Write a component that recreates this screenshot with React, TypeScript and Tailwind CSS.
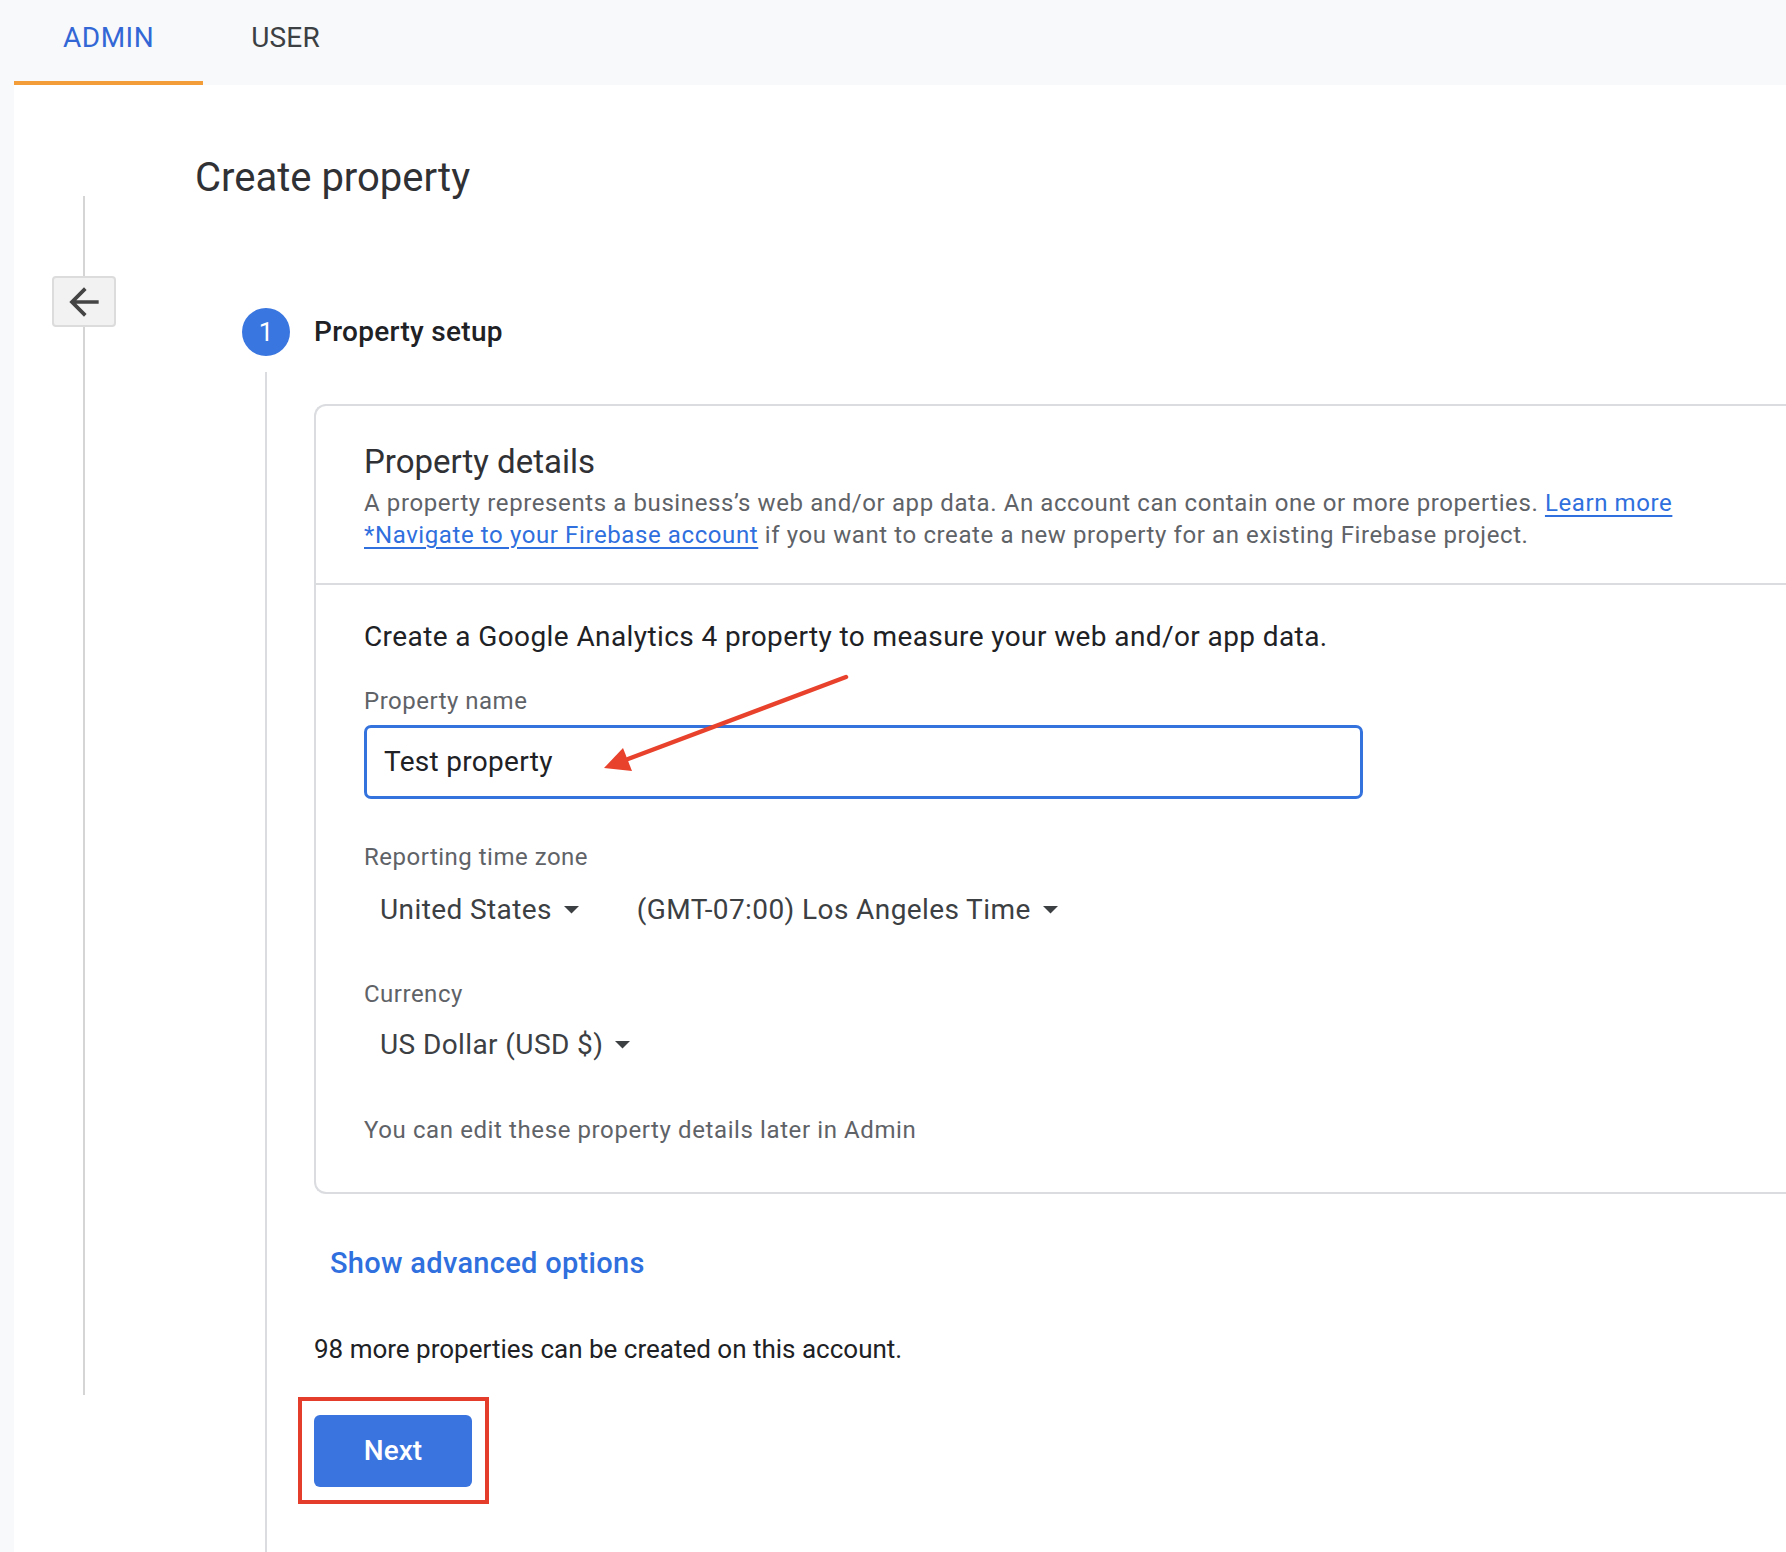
import React from "react";

const Caret = () => (
  <svg width="15" height="8" viewBox="0 0 15 8" className="ml-[12px] shrink-0">
    <path d="M0 0h15L7.5 7.5z" fill="#3c4043" />
  </svg>
);

const Dropdown = ({ label }: { label: string }) => (
  <div className="flex items-center px-[16px] text-[28px] leading-[36px] tracking-[0.4px] text-[#3c4043]">
    <span>{label}</span>
    <Caret />
  </div>
);

const App = () => {
  return (
    <div className="relative min-h-screen w-full overflow-hidden bg-[#f8f9fa] font-['Roboto',sans-serif]">
      {/* Tabs */}
      <header className="flex h-[85px] pl-[14px]">
        <div className="border-b-4 border-[#f29d38] px-[49px] pt-[22px] text-[28px] leading-[32px] tracking-[0.5px] text-[#3367d6]">
          ADMIN
        </div>
        <div className="px-[48px] pt-[22px] text-[28px] leading-[32px] tracking-[0.2px] text-[#3c4043]">
          USER
        </div>
      </header>

      <main className="ml-[14px] flex min-h-[1467px] bg-white">
        {/* Left rail with back button */}
        <div className="ml-[38px] flex w-[64px] shrink-0 flex-col items-center pb-[157px]">
          <div className="h-[111px]" />
          <div className="h-[80px] w-[2px] bg-[#d5d5d5]" />
          <button className="flex h-[51px] w-[64px] items-center justify-center rounded-[4px] border-2 border-[#dcdcdc] bg-[#f2f2f2]">
            <svg width="44" height="44" viewBox="0 0 24 24">
              <path d="M20 11H7.83l5.59-5.59L12 4l-8 8 8 8 1.41-1.41L7.83 13H20v-2z" fill="#444" />
            </svg>
          </button>
          <div className="w-[2px] flex-1 bg-[#d5d5d5]" />
        </div>

        {/* Content */}
        <div className="ml-[79px] flex flex-1 flex-col">
          <h1 className="pt-[69px] text-[40px] font-normal leading-[48px] text-[#303134]">Create property</h1>

          <div className="mt-[106px] pl-[47px]">
            <div className="flex items-center">
              <div className="flex h-[48px] w-[48px] items-center justify-center rounded-full bg-[#3a76df] text-[26px] text-white">
                1
              </div>
              <span className="ml-[24px] text-[28px] font-medium leading-[36px] tracking-[0.3px] text-[#202124]">
                Property setup
              </span>
            </div>

            <div className="ml-[23px] mt-[16px] border-l-2 border-[#dadce0] pb-[48px] pl-[47px] pt-[32px]">
              {/* Card */}
              <div className="rounded-l-[12px] border-2 border-r-0 border-[#dadce0]">
                <div className="border-b-2 border-[#dadce0] px-[48px] pb-[32px] pt-[36px]">
                  <h2 className="text-[33px] font-normal leading-[40px] text-[#303134]">Property details</h2>
                  <p className="mt-[5px] text-[24px] leading-[32px] tracking-[0.6px] text-[#5f6368]">
                    A property represents a business’s web and/or app data. An account can contain one or more properties.{" "}
                    <a className="text-[#2f6fde] underline underline-offset-[4px]">Learn more</a>
                    <br />
                    <a className="text-[#2f6fde] underline underline-offset-[4px]">*Navigate to your Firebase account</a> if you
                    want to create a new property for an existing Firebase project.
                  </p>
                </div>

                <div className="flex flex-col px-[48px] pb-[46px] pt-[34px]">
                  <p className="text-[28px] leading-[36px] tracking-[0.4px] text-[#202124]">
                    Create a Google Analytics 4 property to measure your web and/or app data.
                  </p>

                  <label className="mt-[32px] text-[24px] leading-[28px] tracking-[0.5px] text-[#5f6368]">Property name</label>
                  <div className="mt-[10px] flex h-[74px] w-[999px] items-center rounded-[7px] border-[3px] border-[#3473dd] px-[17px] text-[28px] tracking-[0.3px] text-[#202124]">
                    Test property
                  </div>

                  <label className="mt-[44px] text-[24px] leading-[28px] tracking-[0.5px] text-[#5f6368]">Reporting time zone</label>
                  <div className="mt-[21px] flex gap-[26px]">
                    <Dropdown label="United States" />
                    <Dropdown label="(GMT-07:00) Los Angeles Time" />
                  </div>

                  <label className="mt-[52px] text-[24px] leading-[28px] tracking-[0.5px] text-[#5f6368]">Currency</label>
                  <div className="mt-[19px] flex">
                    <Dropdown label="US Dollar (USD $)" />
                  </div>

                  <p className="mt-[51px] text-[24px] leading-[32px] tracking-[0.6px] text-[#5f6368]">
                    You can edit these property details later in Admin
                  </p>
                </div>
              </div>

              <button className="ml-[16px] mt-[51px] block text-[29px] font-medium leading-[36px] tracking-[0.3px] text-[#2f6fde]">
                Show advanced options
              </button>

              <p className="mt-[52px] text-[26px] leading-[32px] text-[#202124]">
                98 more properties can be created on this account.
              </p>

              <div className="-ml-[16px] mt-[32px] inline-block border-4 border-[#e53d2b] pb-[13px] pl-[12px] pr-[13px] pt-[14px]">
                <button className="flex h-[72px] w-[158px] items-center justify-center rounded-[6px] bg-[#3a74df] text-[28px] font-medium text-white">
                  Next
                </button>
              </div>
            </div>
          </div>
        </div>
      </main>

      {/* Red annotation arrow */}
      <svg className="pointer-events-none absolute left-[590px] top-[665px]" width="270" height="120" viewBox="0 0 270 120">
        <line x1="256" y1="12" x2="38" y2="94" stroke="#e8412c" strokeWidth="4.5" strokeLinecap="round" />
        <polygon points="14,103 33,83 42,106" fill="#e8412c" />
      </svg>
    </div>
  );
};

export default App;
